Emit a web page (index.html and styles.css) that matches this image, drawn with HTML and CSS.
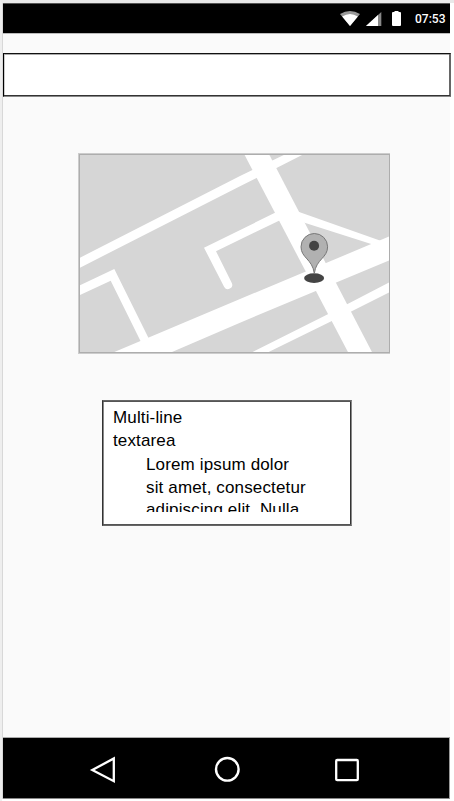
FILE: index.html
```
<!DOCTYPE html>
<html lang="en">
<head>
<meta charset="utf-8">
<title>Map screen</title>
<link rel="stylesheet" href="styles.css">
</head>
<body>
<div class="phone">
  <header class="status">
    <svg class="status-icons" viewBox="335 4 70 29" width="70" height="29">
      <path fill="#999" d="M340 14Q350 8 360 14L350 26Z"/>
      <path fill="#fff" d="M342.2 16.5Q350 11.5 357.8 16.5L350 26Z"/>
      <path fill="#888" d="M381.3 12V26H366Z"/>
      <path fill="#fff" d="M378 15V26H366Z"/>
      <path fill="#fff" d="M394.5 11h4v1h1.5q1 0 1 1v12q0 1-1 1h-7q-1 0-1-1V13q0-1 1-1h1.5z"/>
    </svg>
    <span class="clock">07:53</span>
  </header>
  <main class="content">
    <div class="field"></div>
    <svg class="map" viewBox="78 153 312 201" width="312" height="201">
      <rect x="78" y="153" width="312" height="201" fill="#ccc"/>
      <rect x="79" y="154" width="311" height="199" fill="#adadad"/>
      <rect x="80" y="155" width="309" height="197" fill="#d6d6d6"/>
      <svg x="80" y="155" width="309" height="197" viewBox="80 155 309 197">
        <g fill="#fff">
          <path d="M79 258.2L240 176L288 153H306L276 168.3L240 186.2L79 268.2Z"/>
          <path d="M243.6 153H268.4L373 354H349Z"/>
          <path d="M112 353L240 299L390 236.2V260.2L240 322.7L169 353.3Z"/>
          <path d="M79 285.8L114.3 269L149 339L141.5 343L110.7 280.7L79 295.5Z"/>
          <path d="M204 247.7L276 212.3L280 220.2L216 251.2L231.8 283A4.3 4.3 0 0 1 224.2 287Z"/>
          <path d="M297 211.2L382 241.2L372 244.2L303 222.2Z"/>
          <path d="M250 353.3L328.3 314L390 282V292L351.7 311.3L266 353.3Z"/>
        </g>
        <ellipse cx="314.1" cy="278.1" rx="10" ry="4.9" fill="#444"/>
        <path d="M314.3 273.5C312.5 259 301 258 301 246.8A13.3 13.3 0 0 1 327.6 246.8C327.6 258 316.1 259 314.3 273.5Z" fill="#b1b1b1" stroke="#777" stroke-width="1"/>
        <circle cx="314.1" cy="245.8" r="5" fill="#444"/>
      </svg>
    </svg>
    <section class="note">
      <div class="label">Multi-line<br>textarea</div>
      <div class="text">Lorem ipsum dolor<br>sit amet, consectetur<br>adipiscing elit. Nulla</div>
    </section>
  </main>
  <nav class="nav">
    <svg viewBox="3 738 447 61" width="447" height="61" fill="none" stroke="#fff">
      <path d="M92.3 770L113.8 758.5V781.2Z" stroke-width="2.3"/>
      <circle cx="227.3" cy="769.3" r="11.3" stroke-width="2.4"/>
      <rect x="336.2" y="760" width="21.6" height="20.2" rx="1" stroke-width="2.3"/>
    </svg>
  </nav>
</div>
</body>
</html>
```
FILE: styles.css
```
* { box-sizing: border-box; }
html { background: #fff; }
body {
  margin: 0;
  height: 801px;
  overflow: hidden;
  border-top: 3px solid #e9e9e9;
  border-left: 2px solid #eee;
  font-family: "Liberation Sans", Arial, sans-serif;
}
svg { display: block; }
.phone {
  width: 448px;
  height: 796px;
  display: flex;
  flex-direction: column;
  background: #fafafa;
  border-left: 1px solid #d8d8d8;
}
.status {
  height: 31px;
  display: flex;
  align-items: center;
  justify-content: flex-end;
  background: #000;
  border-top: 1px solid #555;
  border-bottom: 1px solid #bbb;
  padding-right: 4px;
  flex: none;
}
.clock {
  width: 31px;
  margin-left: 10px;
  padding-top: 2px;
  font: 500 12px/27px Roboto, sans-serif;
  color: #fff;
  white-space: nowrap;
}
.content {
  flex: 1;
  display: flex;
  flex-direction: column;
  padding-top: 19px;
}
.field {
  width: 448px;
  height: 44px;
  flex: none;
  background: #fff;
  border: 1px solid;
  border-color: #111 #666 #888 #000;
  box-shadow: inset 0 -1px #333, inset -1px 0 #666, inset 0 1px #aaa, inset 1px 0 #ccc;
}
.map { margin: 56px 0 0 75px; flex: none; }
.note {
  width: 250px;
  height: 126px;
  flex: none;
  margin: 46px 0 0 99px;
  padding: 5px 10px;
  background: #fff;
  border: 1px solid;
  border-color: #666 #888 #666 #333;
  box-shadow: inset 0 1px #555, inset 0 -1px #555, inset 1px 0 #888, inset -1px 0 #333;
  font-size: 17px;
  letter-spacing: 0.14px;
  color: #000;
}
.label { line-height: 23px; }
.text {
  height: 59px;
  margin: 1px 0 0 33px;
  padding-top: 1px;
  overflow: hidden;
  line-height: 22.5px;
  white-space: nowrap;
}
.nav {
  height: 62px;
  flex: none;
  background: #000;
  border-top: 1px solid #aaa;
  border-right: 1px solid #999;
  border-bottom: 1px solid #888;
  overflow: hidden;
}
```
